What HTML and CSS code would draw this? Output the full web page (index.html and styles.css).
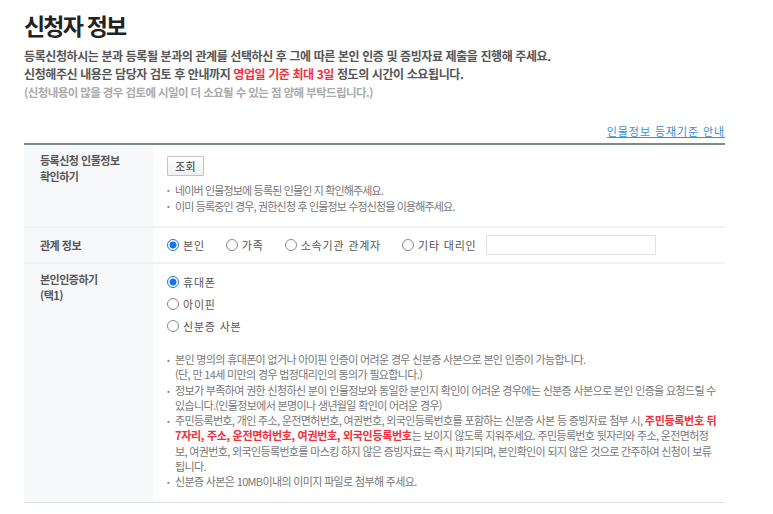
FILE: index.html
```html
<!DOCTYPE html>
<html lang="ko">
<head>
<meta charset="utf-8">
<link rel="stylesheet" href="styles.css">
</head>
<body>
<div class="page">
  <h1 class="title">신청자 정보</h1>
  <p class="intro">등록신청하시는 분과 등록될 분과의 관계를 선택하신 후 그에 따른 본인 인증 및 증빙자료 제출을 진행해 주세요.</p>
  <p class="intro">신청해주신 내용은 담당자 검토 후 안내까지 <em class="red">영업일 기준 최대 3일</em> 정도의 시간이 소요됩니다.</p>
  <p class="intro sub">(신청내용이 많을 경우 검토에 시일이 더 소요될 수 있는 점 양해 부탁드립니다.)</p>

  <div class="linkbar"><a class="guide" href="#">인물정보 등재기준 안내</a></div>

  <div class="table">
    <div class="row">
      <div class="label">등록신청 인물정보<br>확인하기</div>
      <div class="cell">
        <button class="btn" type="button">조회</button>
        <ul class="notes first">
          <li>네이버 인물정보에 등록된 인물인 지 확인해주세요.</li>
          <li>이미 등록중인 경우, 권한신청 후 인물정보 수정신청을 이용해주세요.</li>
        </ul>
      </div>
    </div>
    <div class="row">
      <div class="label mid">관계 정보</div>
      <div class="cell inline">
        <label class="radio"><span class="dot on"></span>본인</label>
        <label class="radio"><span class="dot"></span>가족</label>
        <label class="radio"><span class="dot"></span>소속기관 관계자</label>
        <label class="radio"><span class="dot"></span>기타 대리인</label>
        <span class="textbox"></span>
      </div>
    </div>
    <div class="row last">
      <div class="label">본인인증하기<br>(택1)</div>
      <div class="cell stacked">
        <div class="stack">
          <label class="radio"><span class="dot on"></span>휴대폰</label>
          <label class="radio"><span class="dot"></span>아이핀</label>
          <label class="radio"><span class="dot"></span>신분증 사본</label>
        </div>
        <ul class="notes long">
          <li>본인 명의의 휴대폰이 없거나 아이핀 인증이 어려운 경우 신분증 사본으로 본인 인증이 가능합니다.<br>(단, 만 14세 미만의 경우 법정대리인의 동의가 필요합니다.)</li>
          <li>정보가 부족하여 권한 신청하신 분이 인물정보와 동일한 분인지 확인이 어려운 경우에는 신분증 사본으로 본인 인증을 요청드릴 수 있습니다.(인물정보에서 본명이나 생년월일 확인이 어려운 경우)</li>
          <li>주민등록번호, 개인 주소, 운전면허번호, 여권번호, 외국인등록번호를 포함하는 신분증 사본 등 증빙자료 첨부 시, <b class="red">주민등록번호 뒤 7자리, 주소, 운전면허번호, 여권번호, 외국인등록번호</b>는 보이지 않도록 지워주세요. 주민등록번호 뒷자리와 주소, 운전면허정보, 여권번호, 외국인등록번호를 마스킹 하지 않은 증빙자료는 즉시 파기되며, 본인확인이 되지 않은 것으로 간주하여 신청이 보류됩니다.</li>
          <li>신분증 사본은 10MB이내의 이미지 파일로 첨부해 주세요.</li>
        </ul>
      </div>
    </div>
  </div>
</div>
</body>
</html>
```

FILE: styles.css
```css
* { box-sizing: border-box; }
body {
  margin: 0;
  background: #fff;
  font-family: "Noto Sans CJK KR", "Noto Sans", sans-serif;
  color: #555;
}
.page {
  width: 701px;
  margin-left: 24px;
  padding-top: 9px;
}
.title {
  margin: 0;
  font-size: 23px;
  line-height: 32px;
  font-weight: 700;
  letter-spacing: -1.8px;
  color: #222;
}
.intro {
  margin: 0;
  font-size: 12px;
  line-height: 18px;
  font-weight: 700;
  letter-spacing: -0.4px;
  color: #555;
}
.intro:first-of-type { margin-top: 6px; }
.intro .red { font-style: normal; color: #f0303a; }
.intro.sub { color: #aaa; font-weight: 700; font-size: 11.5px; letter-spacing: -0.6px; }
.linkbar {
  display: flex;
  justify-content: flex-end;
  margin-top: 22px;
  height: 20px;
}
.guide {
  font-size: 11px;
  line-height: 16px;
  color: #3b8fd8;
  text-decoration: underline;
  letter-spacing: 0.9px;
}
.table {
  border-top: 2px solid #7f8a8f;
  border-bottom: 1px solid #dde2e4;
}
.row {
  display: flex;
  border-bottom: 2px solid #f0f1f3;
}
.row.last { border-bottom: 0; }
.label {
  width: 129px;
  flex-shrink: 0;
  background: #f7f8fa;
  padding: 7px 0 0 16px;
  font-size: 11px;
  line-height: 16px;
  font-weight: 700;
  color: #555;
  letter-spacing: -0.5px;
}
.label.mid { padding-top: 0; display: flex; align-items: center; }
.cell {
  flex: 1;
  padding: 11px 0 12px 14px;
}
.cell.stacked { padding-top: 10px; }
.cell.inline {
  display: flex;
  align-items: center;
  padding: 7px 0 7px 14px;
  gap: 21px;
}
.cell.inline .textbox { margin-left: -12px; }
.btn {
  display: block;
  height: 20px;
  padding: 0 7px;
  border: 1px solid #c3c3c3;
  background: linear-gradient(#fff, #f1f1f1);
  font-family: inherit;
  font-size: 11px;
  color: #333;
  line-height: 18px;
  border-radius: 1px;
  letter-spacing: 0.5px;
}
.notes {
  list-style: none;
  margin: 0;
  padding: 0;
  font-size: 11px;
  line-height: 15.3px;
  color: #777;
  letter-spacing: -0.65px;
}
.notes.long { padding-right: 5px; }
.notes.first { margin-top: 6px; line-height: 16px; letter-spacing: -0.85px; }
.notes li {
  position: relative;
  padding-left: 8px;
}
.notes li::before {
  content: "•";
  position: absolute;
  left: 0;
  top: 0;
  font-size: 8px;
  color: #888;
}
.notes .red { color: #f0303a; font-weight: 700; letter-spacing: -0.3px; }
.radio {
  display: flex;
  align-items: center;
  font-size: 11px;
  line-height: 16px;
  color: #555;
  letter-spacing: 0.8px;
}
.dot {
  width: 12px;
  height: 12px;
  border: 1px solid #8a8a8a;
  border-radius: 50%;
  margin-right: 4px;
  flex-shrink: 0;
  background: #fff;
}
.dot.on {
  border-color: #1a73e8;
  background: radial-gradient(circle, #1a73e8 0 3.3px, #fff 3.8px);
}
.textbox {
  width: 170px;
  height: 20px;
  border: 1px solid #e2e2e2;
  background: #fff;
}
.stack {
  display: flex;
  flex-direction: column;
  gap: 6px;
  margin-bottom: 18px;
}
```
